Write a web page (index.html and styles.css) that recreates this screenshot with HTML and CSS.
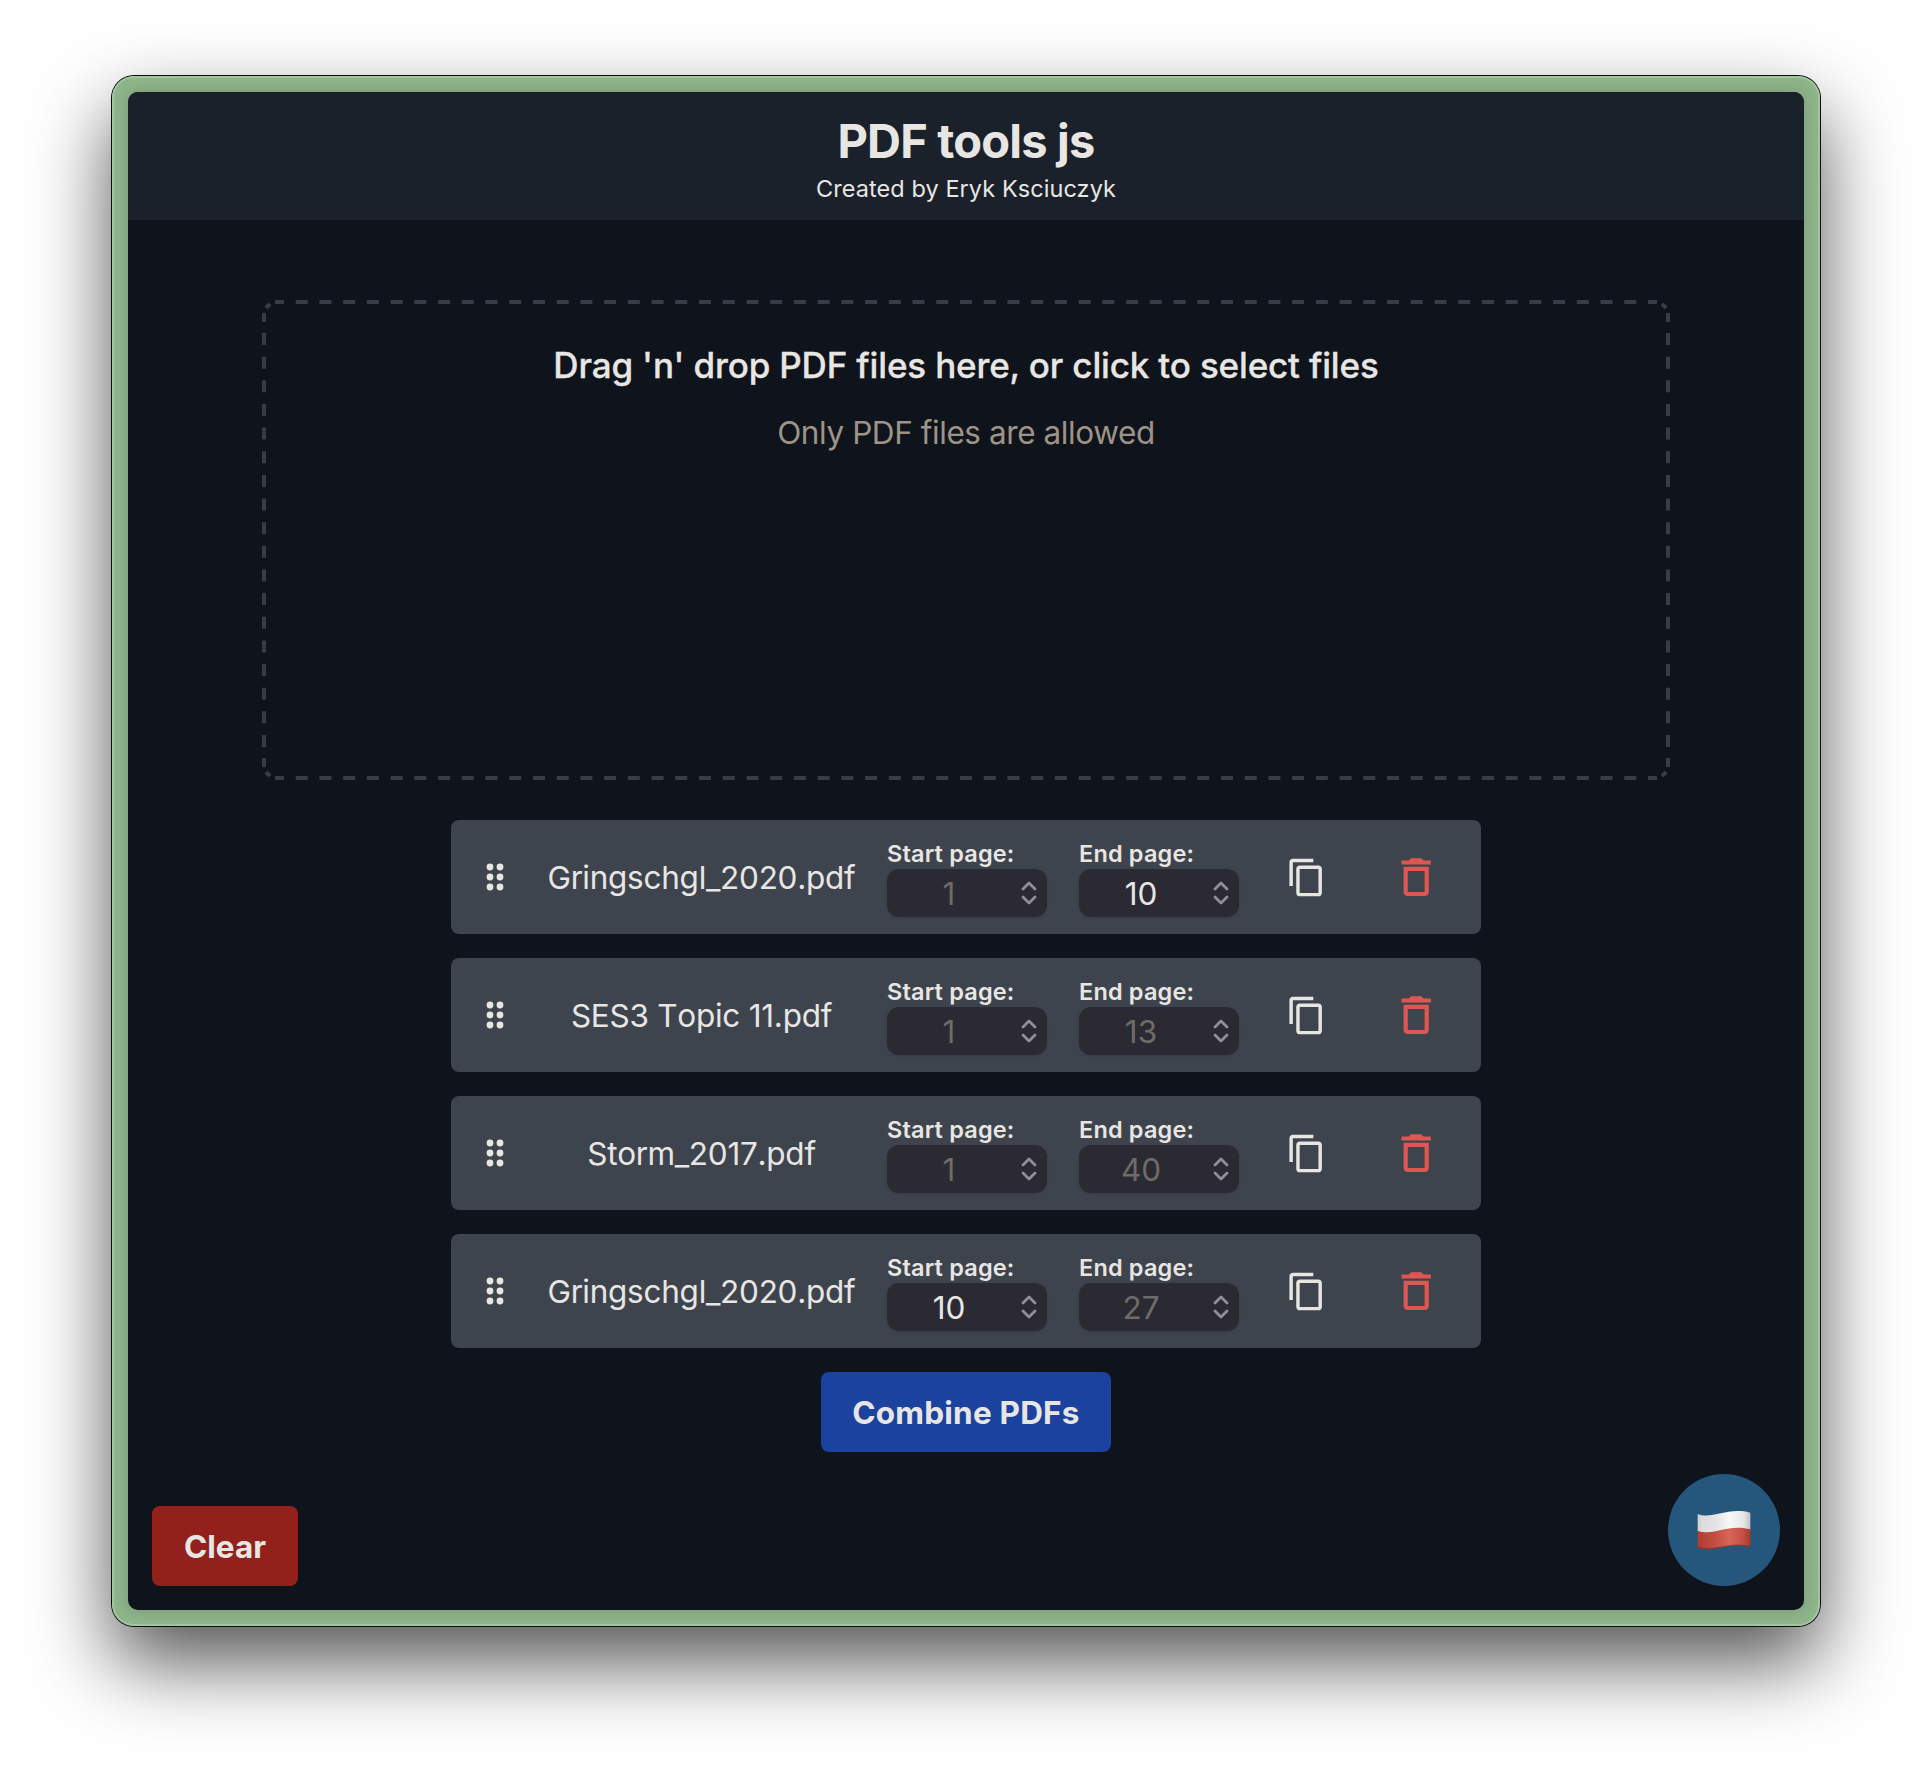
FILE: index.html
```html
<!DOCTYPE html>
<html lang="en">
<head>
<meta charset="utf-8">
<title>PDF tools js</title>
<link rel="stylesheet" href="styles.css">
</head>
<body>
<svg width="0" height="0" class="defs">
  <symbol id="grip" viewBox="0 0 18 28"><circle cx="4" cy="4" r="3.4"/><circle cx="14" cy="4" r="3.4"/><circle cx="4" cy="14" r="3.4"/><circle cx="14" cy="14" r="3.4"/><circle cx="4" cy="24" r="3.4"/><circle cx="14" cy="24" r="3.4"/></symbol>
  <symbol id="copy" viewBox="0 0 24 24"><path d="M16 1H4c-1.1 0-2 .9-2 2v14h2V3h12V1zm3 4H8c-1.1 0-2 .9-2 2v14c0 1.1.9 2 2 2h11c1.1 0 2-.9 2-2V7c0-1.1-.9-2-2-2zm0 16H8V7h11v14z"/></symbol>
  <symbol id="trash" viewBox="0 0 24 24"><path d="M6 19c0 1.1.9 2 2 2h8c1.1 0 2-.9 2-2V7H6v12zM8 9h8v10H8V9zm7.5-5-1-1h-5l-1 1H5v2h14V4h-3.5z"/></symbol>
  <symbol id="spin" viewBox="0 0 16 26"><path d="M2 9l6-6 6 6M2 17l6 6 6-6" fill="none" stroke="#8f8f9d" stroke-width="2.8" stroke-linecap="round" stroke-linejoin="round"/></symbol>
</svg>
<div class="window">
  <div class="app">
    <header class="header">
      <h1 class="title">PDF tools js</h1>
      <p class="author">Created by Eryk Ksciuczyk</p>
    </header>
    <main class="main">
      <section class="dropzone">
        <svg class="outline" width="1408" height="480" fill="none" stroke="#3a3d40" stroke-width="4">
          <path stroke-dasharray="12 11.725" d="M33.7 2H1374.3M33.7 478H1374.3"/>
          <path stroke-dasharray="12 11.647" d="M2 33V447M1406 33V447"/>
          <path d="M13 2h9M1386 2h9M13 478h9M1386 478h9M2 13v9M2 458v9M1406 13v9M1406 458v9"/>
          <path d="M4 8l4-4M1404 8l-4-4M4 472l4 4M1404 472l-4 4"/>
        </svg>
        <p class="lead">Drag 'n' drop PDF files here, or click to select files</p>
        <p class="hint">Only PDF files are allowed</p>
      </section>
      <ul class="files">
        <li class="file">
          <svg class="grip"><use href="#grip"/></svg><span class="name">Gringschgl_2020.pdf</span>
          <div class="field"><span class="label">Start page:</span><div class="input"><span class="num empty">1</span><svg class="spin"><use href="#spin"/></svg></div></div>
          <div class="field"><span class="label">End page:</span><div class="input"><span class="num">10</span><svg class="spin"><use href="#spin"/></svg></div></div>
          <svg class="copy"><use href="#copy"/></svg><svg class="trash"><use href="#trash"/></svg>
        </li>
        <li class="file">
          <svg class="grip"><use href="#grip"/></svg><span class="name">SES3 Topic 11.pdf</span>
          <div class="field"><span class="label">Start page:</span><div class="input"><span class="num empty">1</span><svg class="spin"><use href="#spin"/></svg></div></div>
          <div class="field"><span class="label">End page:</span><div class="input"><span class="num empty">13</span><svg class="spin"><use href="#spin"/></svg></div></div>
          <svg class="copy"><use href="#copy"/></svg><svg class="trash"><use href="#trash"/></svg>
        </li>
        <li class="file">
          <svg class="grip"><use href="#grip"/></svg><span class="name">Storm_2017.pdf</span>
          <div class="field"><span class="label">Start page:</span><div class="input"><span class="num empty">1</span><svg class="spin"><use href="#spin"/></svg></div></div>
          <div class="field"><span class="label">End page:</span><div class="input"><span class="num empty">40</span><svg class="spin"><use href="#spin"/></svg></div></div>
          <svg class="copy"><use href="#copy"/></svg><svg class="trash"><use href="#trash"/></svg>
        </li>
        <li class="file">
          <svg class="grip"><use href="#grip"/></svg><span class="name">Gringschgl_2020.pdf</span>
          <div class="field"><span class="label">Start page:</span><div class="input"><span class="num">10</span><svg class="spin"><use href="#spin"/></svg></div></div>
          <div class="field"><span class="label">End page:</span><div class="input"><span class="num empty">27</span><svg class="spin"><use href="#spin"/></svg></div></div>
          <svg class="copy"><use href="#copy"/></svg><svg class="trash"><use href="#trash"/></svg>
        </li>
      </ul>
      <button class="btn combine">Combine PDFs</button>
    </main>
    <footer class="footer">
      <button class="btn clear">Clear</button>
      <button class="lang" aria-label="Polski">
        <svg width="54" height="40" viewBox="0 0 162 120">
          <defs>
            <linearGradient id="fw" x1="0" x2="1"><stop offset="0" stop-color="#cfcfcf"/><stop offset=".08" stop-color="#dcdcdc"/><stop offset=".35" stop-color="#e4e4e4"/><stop offset=".6" stop-color="#f8f8f8"/><stop offset=".88" stop-color="#e6e6e6"/><stop offset="1" stop-color="#c2c2c2"/></linearGradient>
            <linearGradient id="fr" x1="0" x2="1"><stop offset="0" stop-color="#b03c30"/><stop offset=".3" stop-color="#c14c40"/><stop offset=".6" stop-color="#d5655a"/><stop offset=".85" stop-color="#c65145"/><stop offset="1" stop-color="#a8382d"/></linearGradient>
          </defs>
          <path fill="url(#fw)" d="M2 12C45 30 90-10 160 8V60C95 42 50 80 2 64Z"/>
          <path fill="url(#fr)" d="M2 64C50 78 95 40 160 58V111C95 95 50 130 2 113Z"/>
          <path fill="none" stroke="#7c241c" stroke-opacity=".7" stroke-width="3" d="M2 112C50 128 95 94 160 109"/>
        </svg>
      </button>
    </footer>
  </div>
</div>
</body>
</html>
```
FILE: styles.css
```css
* { box-sizing: border-box; }
body {
  margin: 0;
  height: 1774px;
  padding: 76px 112px 0;
  overflow: hidden;
  background: #fff;
  color: #e8e6e3;
  font-family: Inter, "Liberation Sans", sans-serif;
}
h1, p, ul { margin: 0; padding: 0; }
button { border: 0; padding: 0; color: inherit; font-family: inherit; }
.defs { position: absolute; }
.window {
  width: 1708px;
  height: 1550px;
  padding: 16px;
  border-radius: 22px;
  background: #8eb48a;
  box-shadow: inset 0 0 0 2px #a3c4a0, 0 0 0 1px #0a0f0a, 0 36px 80px rgba(0, 0, 0, .68);
}
.app {
  height: 1518px;
  display: flex;
  flex-direction: column;
  border-radius: 10px;
  overflow: hidden;
  background: #0f131c;
  box-shadow: 0 0 14px rgba(0, 0, 0, .16);
}
.header {
  height: 128px;
  padding-top: 17px;
  background: #1b212a;
  text-align: center;
}
.title { font-size: 47px; line-height: 64px; font-weight: 700; letter-spacing: -.8px; }
.author { font-size: 23.5px; line-height: 32px; letter-spacing: .07px; }
.main { display: flex; flex-direction: column; align-items: center; padding-top: 80px; }
.dropzone {
  position: relative;
  width: 1408px;
  height: 480px;
  padding-top: 41px;
  text-align: center;
}
.outline { position: absolute; inset: 0; }
.lead { font-size: 35px; line-height: 48px; font-weight: 500; letter-spacing: -.16px; -webkit-text-stroke: .3px #e8e6e3; }
.hint { margin-top: 20px; font-size: 31.5px; line-height: 48px; letter-spacing: -.42px; color: #9d9488; }
.files { margin-top: 40px; display: flex; flex-direction: column; gap: 24px; list-style: none; }
.file {
  width: 1030px;
  height: 114px;
  display: grid;
  grid-template-columns: 88px 325px 23px 160px 32px 160px 135px 83px;
  align-items: center;
  justify-items: center;
  border-radius: 8px;
  background: #3e444d;
}
.grip { width: 18px; height: 28px; fill: #e8e6e3; }
.name { padding-top: 2px; font-size: 31.5px; line-height: 48px; letter-spacing: -.26px; font-kerning: none; white-space: nowrap; }
.field { grid-column: 4; display: flex; flex-direction: column; }
.field + .field { grid-column: 6; }
.label { height: 32px; font-size: 23.5px; line-height: 34px; font-weight: 600; letter-spacing: .17px; white-space: nowrap; }
.input {
  width: 160px;
  height: 48px;
  padding: 0 10px 0 0;
  display: flex;
  align-items: center;
  border-radius: 12px;
  background: #2b2a33;
  box-shadow: 0 1px 3px rgba(0, 0, 0, .12);
}
.num { width: 124px; margin-right: 10px; padding-top: 2px; font-size: 31.5px; line-height: 46px; text-align: center; }
.empty { color: #6e6b69; }
.spin { width: 16px; height: 26px; }
.copy { width: 41px; height: 41px; fill: #e8e6e3; }
.trash { width: 50.4px; height: 50.4px; margin-left: 1px; fill: #de5751; }
.btn { height: 80px; padding-top: 2px; border-radius: 8px; font-size: 31.5px; font-weight: 700; line-height: 78px; }
.combine { width: 290px; margin-top: 24px; background: #1c42a0; letter-spacing: .2px; }
.footer {
  margin-top: 22px;
  padding: 0 24px;
  display: flex;
  justify-content: space-between;
  align-items: flex-end;
}
.clear { width: 146px; background: #92211c; }
.lang {
  width: 112px;
  height: 112px;
  display: flex;
  align-items: center;
  justify-content: center;
  border-radius: 50%;
  background: #25577c;
}
```
